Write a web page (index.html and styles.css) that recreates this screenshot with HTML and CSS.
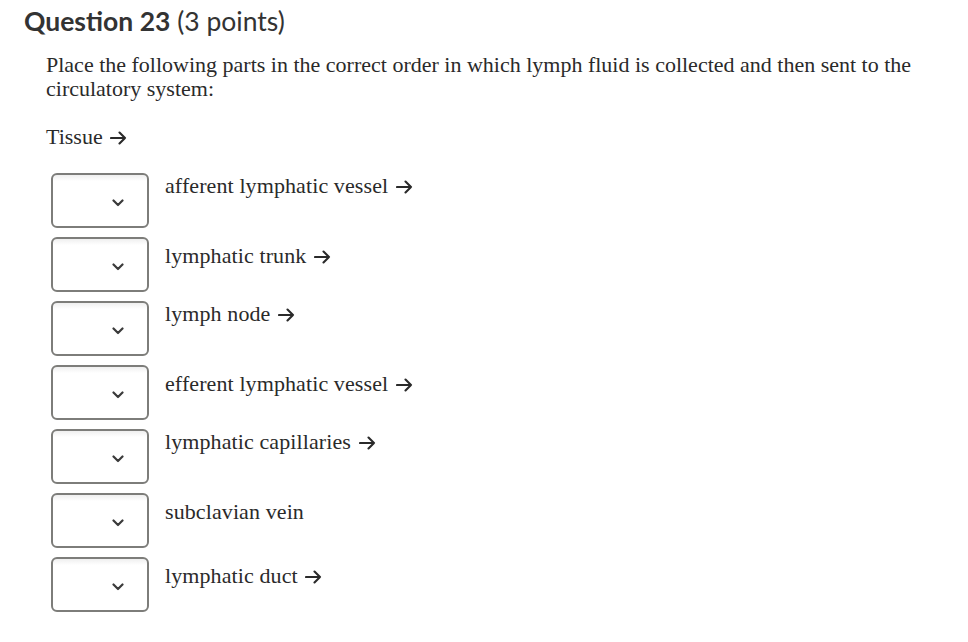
FILE: index.html
```html
<!DOCTYPE html>
<html lang="en">
<head>
    <meta charset="UTF-8">
    <meta name="viewport" content="width=device-width, initial-scale=1.0">
    <title>Question 23</title>
    <link rel="stylesheet" href="styles.css">
</head>
<body>
    <main id="question">
        <h2 class="title"><span class="num">Question 23</span> (3 points)</h2>
        <section class="body">
            <p class="prompt">Place the following parts in the correct order in which lymph fluid is collected and then sent to the circulatory system:</p>
            <p class="start">Tissue <svg class="arrow" width="17" height="14" viewBox="0 0 17 14"><path d="M1 7 H15 M9.5 1.5 L15 7 L9.5 12.5" fill="none" stroke="#2a2a2a" stroke-width="2.1" stroke-linecap="round" stroke-linejoin="round"/></svg></p>
            <div class="rows">
                <div class="row">
                    <div class="pick"><svg class="chev" width="12" height="8" viewBox="0 0 12 8"><path d="M1.5 1.5 L6 6 L10.5 1.5" fill="none" stroke="#3b3b3b" stroke-width="2.2" stroke-linecap="round" stroke-linejoin="round"/></svg></div>
                    <p class="part">afferent lymphatic vessel <svg class="arrow" width="17" height="14" viewBox="0 0 17 14"><path d="M1 7 H15 M9.5 1.5 L15 7 L9.5 12.5" fill="none" stroke="#2a2a2a" stroke-width="2.1" stroke-linecap="round" stroke-linejoin="round"/></svg></p>
                </div>
                <div class="row">
                    <div class="pick"><svg class="chev" width="12" height="8" viewBox="0 0 12 8"><path d="M1.5 1.5 L6 6 L10.5 1.5" fill="none" stroke="#3b3b3b" stroke-width="2.2" stroke-linecap="round" stroke-linejoin="round"/></svg></div>
                    <p class="part drop">lymphatic trunk <svg class="arrow" width="17" height="14" viewBox="0 0 17 14"><path d="M1 7 H15 M9.5 1.5 L15 7 L9.5 12.5" fill="none" stroke="#2a2a2a" stroke-width="2.1" stroke-linecap="round" stroke-linejoin="round"/></svg></p>
                </div>
                <div class="row">
                    <div class="pick"><svg class="chev" width="12" height="8" viewBox="0 0 12 8"><path d="M1.5 1.5 L6 6 L10.5 1.5" fill="none" stroke="#3b3b3b" stroke-width="2.2" stroke-linecap="round" stroke-linejoin="round"/></svg></div>
                    <p class="part">lymph node <svg class="arrow" width="17" height="14" viewBox="0 0 17 14"><path d="M1 7 H15 M9.5 1.5 L15 7 L9.5 12.5" fill="none" stroke="#2a2a2a" stroke-width="2.1" stroke-linecap="round" stroke-linejoin="round"/></svg></p>
                </div>
                <div class="row">
                    <div class="pick"><svg class="chev" width="12" height="8" viewBox="0 0 12 8"><path d="M1.5 1.5 L6 6 L10.5 1.5" fill="none" stroke="#3b3b3b" stroke-width="2.2" stroke-linecap="round" stroke-linejoin="round"/></svg></div>
                    <p class="part drop">efferent lymphatic vessel <svg class="arrow" width="17" height="14" viewBox="0 0 17 14"><path d="M1 7 H15 M9.5 1.5 L15 7 L9.5 12.5" fill="none" stroke="#2a2a2a" stroke-width="2.1" stroke-linecap="round" stroke-linejoin="round"/></svg></p>
                </div>
                <div class="row">
                    <div class="pick"><svg class="chev" width="12" height="8" viewBox="0 0 12 8"><path d="M1.5 1.5 L6 6 L10.5 1.5" fill="none" stroke="#3b3b3b" stroke-width="2.2" stroke-linecap="round" stroke-linejoin="round"/></svg></div>
                    <p class="part">lymphatic capillaries <svg class="arrow" width="17" height="14" viewBox="0 0 17 14"><path d="M1 7 H15 M9.5 1.5 L15 7 L9.5 12.5" fill="none" stroke="#2a2a2a" stroke-width="2.1" stroke-linecap="round" stroke-linejoin="round"/></svg></p>
                </div>
                <div class="row">
                    <div class="pick"><svg class="chev" width="12" height="8" viewBox="0 0 12 8"><path d="M1.5 1.5 L6 6 L10.5 1.5" fill="none" stroke="#3b3b3b" stroke-width="2.2" stroke-linecap="round" stroke-linejoin="round"/></svg></div>
                    <p class="part drop">subclavian vein</p>
                </div>
                <div class="row">
                    <div class="pick"><svg class="chev" width="12" height="8" viewBox="0 0 12 8"><path d="M1.5 1.5 L6 6 L10.5 1.5" fill="none" stroke="#3b3b3b" stroke-width="2.2" stroke-linecap="round" stroke-linejoin="round"/></svg></div>
                    <p class="part drop">lymphatic duct <svg class="arrow" width="17" height="14" viewBox="0 0 17 14"><path d="M1 7 H15 M9.5 1.5 L15 7 L9.5 12.5" fill="none" stroke="#2a2a2a" stroke-width="2.1" stroke-linecap="round" stroke-linejoin="round"/></svg></p>
                </div>
            </div>
        </section>
    </main>
</body>
</html>
```

FILE: styles.css
```css
body{
    margin: 0;
    padding: 0;
    background-color: #ffffff;
    color: #2d2d2d;
}

#question{
    padding: 6px 0 0 24px;
}

.title{
    margin: 0;
    font-family: Lato, sans-serif;
    font-size: 26.5px;
    font-weight: normal;
    line-height: 30px;
    color: #333333;
}

.num{
    font-weight: bold;
}

.body{
    padding: 17px 0 0 22px;
    font-family: "Liberation Serif", serif;
    font-size: 22px;
    line-height: 24px;
    color: #2a2a2a;
}

.prompt{
    margin: 0;
    width: 890px;
}

.start{
    margin: 24px 0 0 0;
}

.part{
    margin: 1px 0 0 0;
    letter-spacing: 0.1px;
}

.drop{
    margin-top: 7px;
}

.arrow{
    vertical-align: -1px;
    margin-left: 2px;
}

.rows{
    display: flex;
    flex-direction: column;
    gap: 9px;
    margin-top: 24px;
    margin-left: 5px;
}

.row{
    display: flex;
    align-items: flex-start;
    gap: 16px;
}

.pick{
    width: 70px;
    height: 51px;
    padding-right: 23px;
    border: 2px solid #7d7d7a;
    border-radius: 6px;
    background: linear-gradient(#efefef, #ffffff 6px);
    display: flex;
    justify-content: flex-end;
    align-items: center;
    flex-shrink: 0;
}

.pick{
    width: 71px;
}

.chev{
    margin-top: 4px;
}
```
